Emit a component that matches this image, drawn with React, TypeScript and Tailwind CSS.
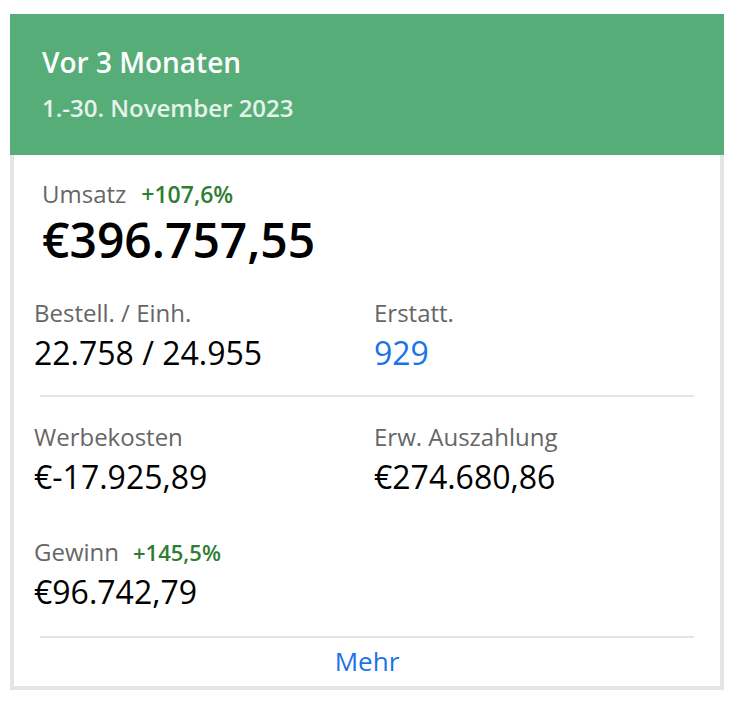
import React from 'react';

const font = { fontFamily: '"Open Sans", "Noto Sans", sans-serif' };

function Stat({ label, value, valueClass = 'text-black', delta }: { label: string; value: string; valueClass?: string; delta?: string }) {
    return (
        <div className="flex flex-col">
            <div className="flex items-baseline gap-[14px]">
                <span className="text-[24px] leading-[32px] text-[#666666]">{label}</span>
                {delta && <span className="text-[22px] leading-[32px] font-semibold text-[#2e7d32]">{delta}</span>}
            </div>
            <span className={`mt-[4px] text-[32px] leading-[40px] ${valueClass}`}>{value}</span>
        </div>
    );
}

export default function App() {
    return (
        <div className="bg-white w-[748px] h-[708px] pt-[14px] pl-[10px]" style={font}>
            <div className="w-[714px] flex flex-col">
                {/* HEADER */}
                <div className="h-[141px] bg-[#56ad78] pl-[32px] pt-[29px] flex flex-col">
                    <p className="text-[28px] leading-[38px] font-semibold text-white">Vor 3 Monaten</p>
                    <p className="mt-[11px] text-[24px] leading-[32px] font-semibold text-white/85">1.-30. November 2023</p>
                </div>

                {/* BODY */}
                <div className="border-x-4 border-b-4 border-[#e5e5e5] bg-white flex flex-col">
                    <div className="pl-[28px] pt-[23px] flex flex-col">
                        <div className="flex items-baseline gap-[15px]">
                            <span className="text-[24px] leading-[32px] text-[#666666]">Umsatz</span>
                            <span className="text-[23px] leading-[32px] font-semibold text-[#2e7d32]">+107,6%</span>
                        </div>
                        <p className="mt-[2px] text-[48px] leading-[56px] font-semibold text-black">€396.757,55</p>
                    </div>

                    <div className="px-[20px] pt-[29px] grid grid-cols-[340px_1fr]">
                        <Stat label="Bestell. / Einh." value="22.758 / 24.955" />
                        <Stat label="Erstatt." value="929" valueClass="text-[#1a73e8]" />
                    </div>

                    <div className="mx-[26px] mt-[22px] h-[2px] bg-[#e5e5e5]" />

                    <div className="px-[20px] pt-[24px] grid grid-cols-[340px_1fr]">
                        <Stat label="Werbekosten" value="€-17.925,89" />
                        <Stat label="Erw. Auszahlung" value="€274.680,86" />
                    </div>

                    <div className="px-[20px] pt-[39px]">
                        <Stat label="Gewinn" value="€96.742,79" delta="+145,5%" />
                    </div>

                    <div className="mx-[26px] mt-[24px] h-[2px] bg-[#e5e5e5]" />

                    <div className="flex justify-center pt-[6px] pb-[8px]">
                        <span className="text-[26px] leading-[34px] text-[#1a73e8]">Mehr</span>
                    </div>
                </div>
            </div>
        </div>
    );
}
